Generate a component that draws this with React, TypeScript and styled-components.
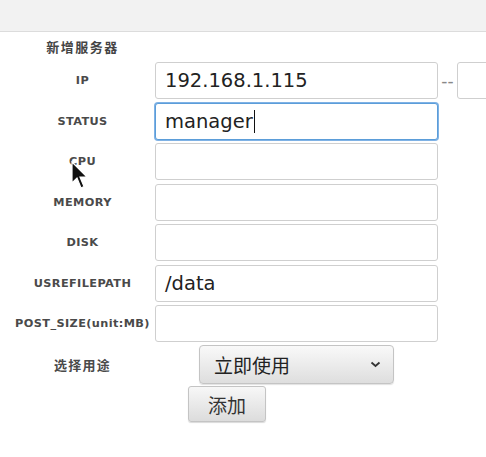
import styled, { createGlobalStyle } from "styled-components";

const GlobalStyle = createGlobalStyle`
  html, body {
    margin: 0;
    padding: 0;
    background: #fff;
    overflow: hidden;
    font-family: "DejaVu Sans", sans-serif;
  }
`;

const fields = [
  { label: "IP", value: "192.168.1.115", range: true },
  { label: "STATUS", value: "manager", focused: true },
  { label: "CPU", value: "" },
  { label: "MEMORY", value: "" },
  { label: "DISK", value: "" },
  { label: "USREFILEPATH", value: "/data" },
  { label: "POST_SIZE(unit:MB)", value: "" },
];

export default function App() {
  return (
    <Page>
      <GlobalStyle />
      <TopBar />
      <Form>
        <Heading>新增服务器</Heading>
        <span />
        {fields.map((f) => (
          <Row key={f.label}>
            <Label>{f.label}</Label>
            <InputCell>
              <TextBox $focused={f.focused}>
                {f.value}
                {f.focused && <Caret />}
              </TextBox>
              {f.range && (
                <>
                  <Dash>--</Dash>
                  <TextBox />
                </>
              )}
            </InputCell>
          </Row>
        ))}
        <Row>
          <Label $cjk>选择用途</Label>
          <SelectCell>
            <Select>
              <span>立即使用</span>
              <svg width="11" height="7" viewBox="0 0 11 7">
                <path d="M1.5 1.5 L5.5 5 L9.5 1.5" fill="none" stroke="#333" strokeWidth="1.8" />
              </svg>
            </Select>
          </SelectCell>
        </Row>
        <ButtonRow>
          <Button>添加</Button>
        </ButtonRow>
      </Form>
      <Cursor width="20" height="30" viewBox="0 0 20 30">
        <path d="M1 1 L1 22 L6 17 L10 27 L13 25.5 L9 16 L16 16 Z" fill="#111" stroke="#fff" strokeWidth="1.2" />
      </Cursor>
    </Page>
  );
}

const Page = styled.div`
  position: relative;
  width: 486px;
  height: 457px;
  overflow: hidden;
`;

const TopBar = styled.div`
  height: 31px;
  background: #f2f2f2;
  border-bottom: 1px solid #dcdcdc;
`;

const Form = styled.div`
  display: grid;
  grid-template-columns: 145px auto;
  row-gap: 3.5px;
  padding: 1.5px 0 0 10px;
`;

const Heading = styled.div`
  height: 25px;
  display: flex;
  align-items: center;
  justify-content: center;
  font-family: "Noto Sans CJK SC", sans-serif;
  font-weight: 700;
  font-size: 13px;
  letter-spacing: 1.5px;
  color: #444;
`;

const Row = styled.div`
  display: contents;
`;

const Label = styled.div<{ $cjk?: boolean }>`
  display: flex;
  align-items: center;
  justify-content: center;
  font-family: ${(p) => (p.$cjk ? '"Noto Sans CJK SC", sans-serif' : '"DejaVu Sans", sans-serif')};
  font-weight: 700;
  font-size: ${(p) => (p.$cjk ? "13px" : "11.3px")};
  letter-spacing: ${(p) => (p.$cjk ? "1.2px" : "0.4px")};
  color: #4a4a4a;
  white-space: nowrap;
`;

const InputCell = styled.div`
  display: flex;
  align-items: center;
`;

const TextBox = styled.div<{ $focused?: boolean }>`
  box-sizing: border-box;
  width: 283px;
  height: 37px;
  flex-shrink: 0;
  display: flex;
  align-items: center;
  padding-left: 9px;
  border: 1px solid ${(p) => (p.$focused ? "#5b9dd9" : "#cfcfcf")};
  box-shadow: ${(p) => (p.$focused ? "0 0 0 1px #7fb2e5" : "none")};
  border-radius: 3px;
  background: #fff;
  font-family: "DejaVu Sans", sans-serif;
  font-size: 19.5px;
  color: #222;
`;

const Caret = styled.span`
  display: inline-block;
  width: 1.5px;
  height: 23px;
  background: #111;
  margin-left: 1px;
`;

const Dash = styled.span`
  width: 19px;
  text-align: center;
  font-size: 17px;
  color: #888;
`;

const SelectCell = styled.div`
  width: 283px;
  display: flex;
  justify-content: center;
  margin-top: -1px;
`;

const Select = styled.div`
  box-sizing: border-box;
  width: 195px;
  height: 39px;
  display: flex;
  align-items: center;
  justify-content: space-between;
  padding: 0 12px 0 14px;
  border: 1px solid #c4c4c4;
  border-radius: 4px;
  background: linear-gradient(#f9f9f9, #dedede);
  box-shadow: 0 1px 1px rgba(0, 0, 0, 0.12);
  font-family: "Noto Sans CJK SC", sans-serif;
  font-size: 19px;
  color: #222;
`;

const ButtonRow = styled.div`
  grid-column: 1 / span 2;
  padding: 0 0 0 178px;
  margin-top: -1px;
`;

const Button = styled.div`
  box-sizing: border-box;
  width: 78px;
  height: 36px;
  display: flex;
  align-items: center;
  justify-content: center;
  border: 1px solid #c4c4c4;
  border-radius: 3px;
  background: linear-gradient(#f7f7f7, #dcdcdc);
  box-shadow: 0 1px 1px rgba(0, 0, 0, 0.15);
  font-family: "Noto Sans CJK SC", sans-serif;
  font-size: 19px;
  color: #333;
`;

const Cursor = styled.svg`
  position: absolute;
  left: 71px;
  top: 161px;
`;
